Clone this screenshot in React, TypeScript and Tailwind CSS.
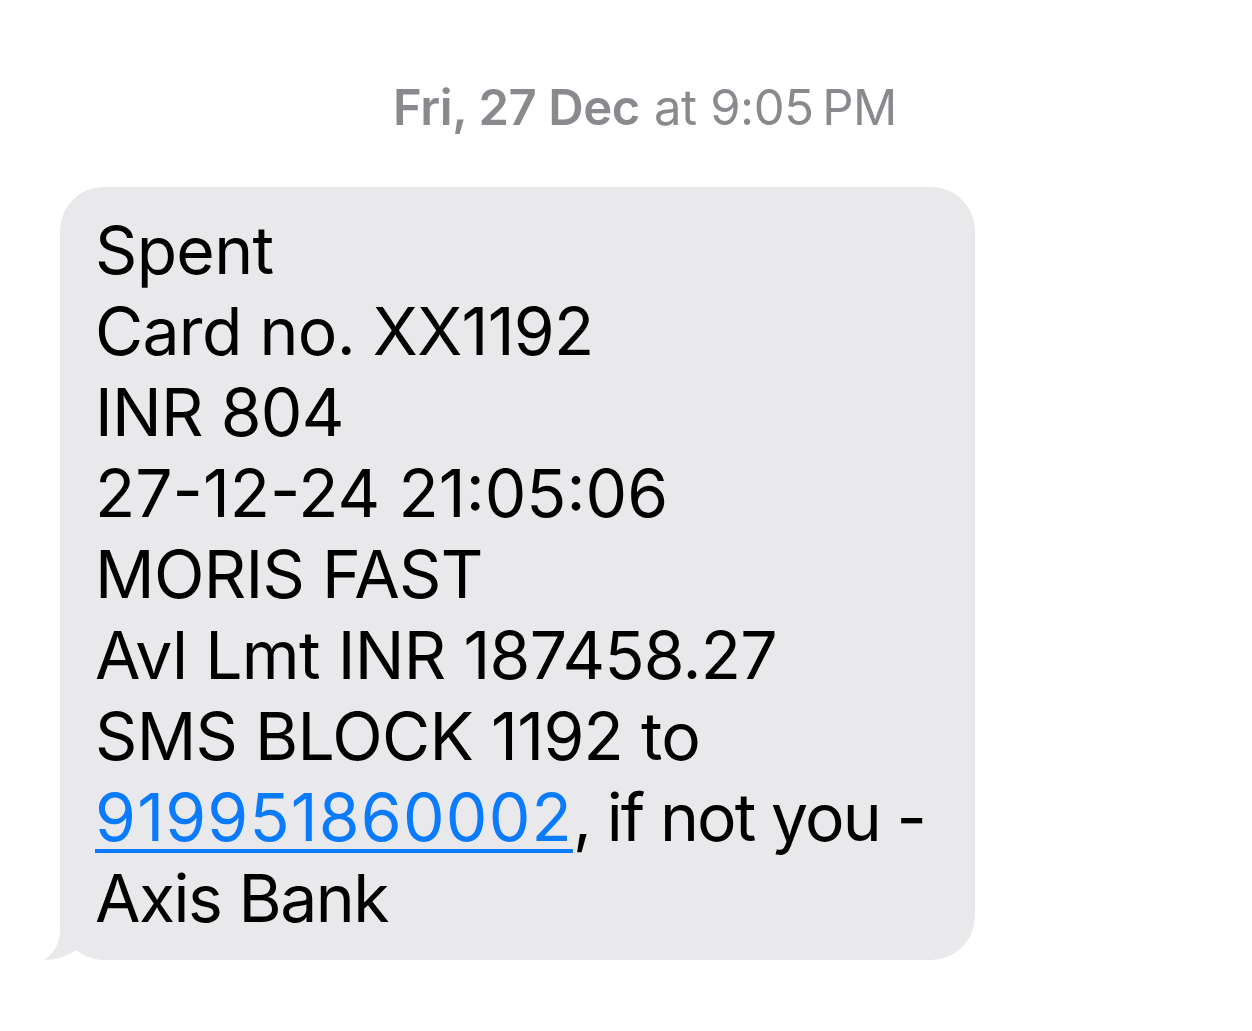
export default function App() {
  const lines = [
    "Spent",
    "Card no. XX1192",
    "INR 804",
    "MORIS FAST",
    "Avl Lmt INR 187458.27",
    "SMS BLOCK 1192 to",
  ]

  return (
    <div
      className="min-h-[1031px] w-full bg-white"
      style={{ fontFamily: "Inter, 'Noto Sans', sans-serif" }}
    >
      {/* Timestamp header */}
      <div className="flex justify-center pt-[78px] pl-[38px] text-[49px] leading-[60px] tracking-[-0.4px] text-[#8a8a8e]">
        <span className="font-semibold">Fri, 27 Dec</span>
        <span className="ml-[14px]">at 9:05&#8201;PM</span>
      </div>

      {/* Incoming message bubble */}
      <div className="pl-[60px] pt-[49px]">
        <div className="relative w-[915px] rounded-[44px] bg-[#e9e9eb]">
          {/* tail */}
          <svg
            className="absolute -left-[16px] bottom-0"
            width="70"
            height="60"
            viewBox="0 0 70 60"
          >
            <path
              d="M16,0 L16,30 C16,45 8,55 0,60 C12,60 24,56 34,49 C41,55 48,60 66,60 L66,0 Z"
              fill="#e9e9eb"
            />
          </svg>

          <div className="relative whitespace-nowrap pl-[35px] pr-[20px] pt-[23px] pb-[21px] text-[66px] leading-[81px] tracking-[-0.7px] text-black">
            {lines.slice(0, 3).map((line) => (
              <div key={line}>{line}</div>
            ))}
            <div className="tracking-[0px]">27-12-24 21:05:06</div>
            {lines.slice(3).map((line) => (
              <div key={line}>{line}</div>
            ))}
            <div>
              <span className="text-[#0a7aff] underline decoration-[4px] underline-offset-[8px] tracking-[1.2px]">919951860002</span>
              <span className="tracking-[-1.9px]">, if not you -</span>
            </div>
            <div className="tracking-[-1.5px]">Axis Bank</div>
          </div>
        </div>
      </div>
    </div>
  )
}
